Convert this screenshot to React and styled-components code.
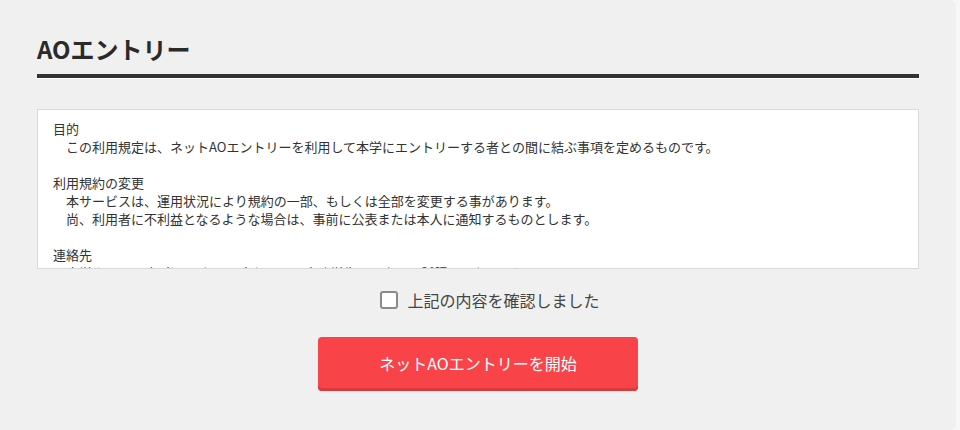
import React, { useState } from 'react';
import styled, { createGlobalStyle } from 'styled-components';

const GlobalStyle = createGlobalStyle`
  html, body {
    margin: 0;
    padding: 0;
    background: #f7f7f7;
  }
  body {
    font-family: 'Noto Sans CJK JP', 'Noto Sans', sans-serif;
    color: #333;
  }
`;

const Page = styled.div`
  width: 956px;
  height: 430px;
  box-sizing: border-box;
  background: #f0f0f0;
  border-radius: 0 6px 6px 0;
  padding: 28px 37px 0;
`;

const Title = styled.h1`
  margin: 0;
  font-size: 24px;
  line-height: 42px;
  font-weight: 700;
  color: #2a2a2a;
  padding-bottom: 4px;
  border-bottom: 4px solid #333;
  box-shadow: 0 1px 0 #fff;
`;

const TermsBox = styled.div`
  margin-top: 31px;
  height: 160px;
  box-sizing: border-box;
  background: #fff;
  border: 1px solid #d9d9d9;
  padding: 10px 15px 0;
  overflow: hidden;
  font-size: 13px;
  line-height: 18px;
  color: #333;
`;

const Section = styled.div`
  & + & {
    margin-top: 18px;
  }
`;

const Heading = styled.div``;

const Line = styled.div`
  padding-left: 13px;
`;

const Confirm = styled.label`
  display: flex;
  align-items: center;
  justify-content: center;
  gap: 9px;
  margin-top: 20px;
  padding-left: 24px;
  font-size: 16px;
  line-height: 22px;
  color: #444;
  cursor: pointer;
`;

const Box = styled.span`
  width: 18px;
  height: 18px;
  box-sizing: border-box;
  border: 2px solid #8a8a8a;
  border-radius: 3px;
  background: ${(p) => (p.$checked ? '#f84449' : '#fff')};
`;

const Hidden = styled.input`
  display: none;
`;

const Actions = styled.div`
  display: flex;
  justify-content: center;
  margin-top: 26px;
`;

const StartButton = styled.button`
  width: 320px;
  height: 54px;
  border: none;
  border-radius: 4px;
  background: #f84449;
  box-shadow: inset 0 -3px 0 #d93a3e;
  color: #fff;
  font-family: inherit;
  font-size: 16px;
  padding: 0 0 3px;
  cursor: pointer;
`;

const sections = [
  {
    heading: '目的',
    lines: [
      'この利用規定は、ネットAOエントリーを利用して本学にエントリーする者との間に結ぶ事項を定めるものです。',
    ],
  },
  {
    heading: '利用規約の変更',
    lines: [
      '本サービスは、運用状況により規約の一部、もしくは全部を変更する事があります。',
      '尚、利用者に不利益となるような場合は、事前に公表または本人に通知するものとします。',
    ],
  },
  {
    heading: '連絡先',
    lines: [
      '本学ネットAO担当へのお問い合わせは、事務学生センター入試課までお願いします。',
    ],
  },
];

export default function App() {
  const [checked, setChecked] = useState(false);
  return (
    <Page>
      <GlobalStyle />
      <Title>AOエントリー</Title>
      <TermsBox>
        {sections.map((s) => (
          <Section key={s.heading}>
            <Heading>{s.heading}</Heading>
            {s.lines.map((l) => (
              <Line key={l}>{l}</Line>
            ))}
          </Section>
        ))}
      </TermsBox>
      <Confirm>
        <Hidden
          type="checkbox"
          checked={checked}
          onChange={() => setChecked(!checked)}
        />
        <Box $checked={checked} />
        上記の内容を確認しました
      </Confirm>
      <Actions>
        <StartButton>ネットAOエントリーを開始</StartButton>
      </Actions>
    </Page>
  );
}
